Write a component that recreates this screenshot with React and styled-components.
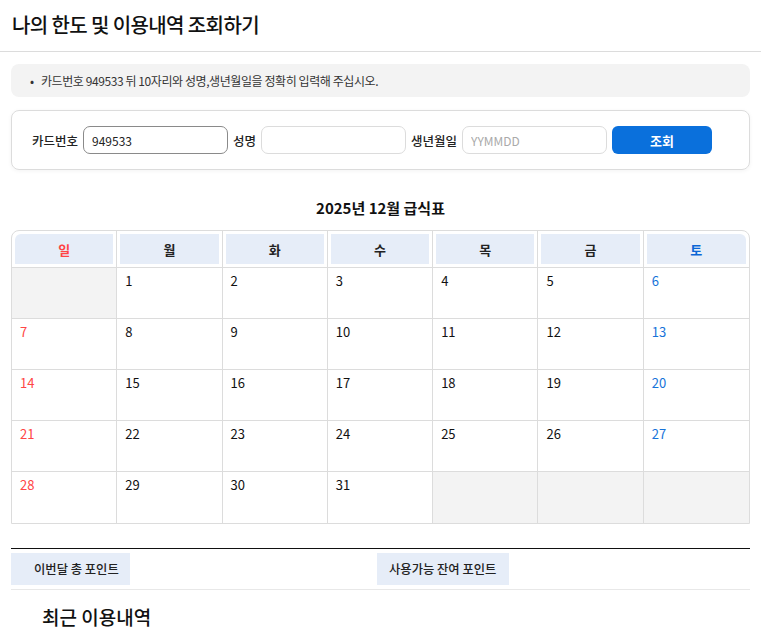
import React from 'react';
import styled, { createGlobalStyle } from 'styled-components';

const GlobalStyle = createGlobalStyle`
  *, *::before, *::after {
    box-sizing: border-box;
  }
  body {
    margin: 0;
    background: #fff;
    font-family: "Noto Sans CJK KR", "Noto Sans", sans-serif;
    color: #111;
  }
`;

const Header = styled.header`
  height: 52px;
  border-bottom: 1px solid #dcdcdc;
  padding: 0 12px 2px;
  display: flex;
  align-items: center;
`;

const Title = styled.h1`
  margin: 0;
  font-size: 20px;
  font-weight: 500;
  letter-spacing: -0.6px;
`;

const Main = styled.main`
  padding: 12px 11px 0;
`;

const Notice = styled.ul`
  margin: 0;
  background: #f3f3f3;
  border-radius: 8px;
  height: 33px;
  padding: 0 0 0 19px;
  display: flex;
  align-items: center;
  font-size: 12px;
  letter-spacing: -0.42px;
  color: #333;
  list-style: none;

  li::before {
    content: '•';
    display: inline-block;
    width: 11px;
  }
`;

const SearchCard = styled.form`
  margin-top: 13px;
  border: 1px solid #dcdcdc;
  border-radius: 8px;
  box-shadow: 0 1px 4px rgba(0, 0, 0, 0.05);
  height: 60px;
  padding: 0 20px;
  display: flex;
  align-items: center;
  gap: 5px;
`;

const Label = styled.label`
  font-size: 12.5px;
  font-weight: 500;
  color: #222;
  white-space: nowrap;
`;

const Input = styled.input`
  width: 145px;
  height: 28px;
  border: 1px solid ${(p) => (p.$focused ? '#8a8a8a' : '#dcdcdc')};
  border-radius: 7px;
  padding: 0 8px;
  font: inherit;
  font-size: 12px;
  color: #222;
  outline: none;

  &::placeholder {
    color: #aaa;
  }
`;

const SearchButton = styled.button`
  width: 100px;
  height: 28px;
  border: 0;
  border-radius: 6px;
  background: #0a70dc;
  color: #fff;
  font: inherit;
  font-size: 13px;
  font-weight: 700;
`;

const CalendarTitle = styled.h2`
  margin: 27px 0 11px;
  text-align: center;
  font-size: 15px;
  font-weight: 700;
  line-height: 22px;
`;

const Calendar = styled.div`
  display: grid;
  grid-template-columns: repeat(7, 1fr);
  border: 1px solid #dcdcdc;
  border-radius: 8px 8px 0 0;
`;

const HeadCell = styled.div`
  padding: 3px;
  border-right: 1px solid #dcdcdc;
  border-bottom: 1px solid #dcdcdc;

  &:nth-child(7) {
    border-right: 0;
  }
`;

const HeadLabel = styled.div`
  height: 30px;
  background: #e6edf8;
  display: flex;
  align-items: center;
  justify-content: center;
  font-size: 13px;
  font-weight: 700;
  color: ${(p) => p.$color};
  border-radius: ${(p) => p.$radius};
`;

const DayCell = styled.div`
  height: 51px;
  padding: 3px 8px 0;
  border-right: 1px solid #dcdcdc;
  border-bottom: 1px solid #dcdcdc;
  background: ${(p) => (p.$empty ? '#f3f3f3' : '#fff')};
  font-size: 13px;
  color: ${(p) => p.$color};

  &:nth-child(7n) {
    border-right: 0;
  }
  &:nth-last-child(-n + 7) {
    border-bottom: 0;
  }
`;

const Points = styled.div`
  margin-top: 24px;
  border-top: 1px solid #111;
  border-bottom: 1px solid #e8e8e8;
  padding: 4px 0;
  display: grid;
  grid-template-columns: 119px 247px 132px 1fr;
`;

const PointLabel = styled.div`
  height: 32px;
  background: #e6edf8;
  display: flex;
  align-items: center;
  padding: ${(p) => p.$pad};
  font-size: 12.3px;
  font-weight: 500;
  color: #222;
  white-space: nowrap;
`;

const SectionTitle = styled.h3`
  margin: 13px 0 0 31px;
  font-size: 19px;
  font-weight: 500;
`;

const weekdays = ['일', '월', '화', '수', '목', '금', '토'];

const dayColor = (i) => (i % 7 === 0 ? '#ff4545' : i % 7 === 6 ? '#1673d9' : '#111');

// December 2025 starts on a Monday, so day n sits at index n
const cells = Array.from({ length: 35 }, (_, i) => (i >= 1 && i <= 31 ? i : null));

export default function App() {
  return (
    <>
      <GlobalStyle />
      <Header>
        <Title>나의 한도 및 이용내역 조회하기</Title>
      </Header>
      <Main>
        <Notice>
          <li>카드번호 949533 뒤 10자리와 성명,생년월일을 정확히 입력해 주십시오.</li>
        </Notice>

        <SearchCard onSubmit={(e) => e.preventDefault()}>
          <Label>카드번호</Label>
          <Input $focused defaultValue="949533" />
          <Label>성명</Label>
          <Input />
          <Label>생년월일</Label>
          <Input placeholder="YYMMDD" />
          <SearchButton type="submit">조회</SearchButton>
        </SearchCard>

        <CalendarTitle>2025년 12월 급식표</CalendarTitle>

        <Calendar>
          {weekdays.map((w, i) => (
            <HeadCell key={w}>
              <HeadLabel
                $color={i === 0 ? '#ff4545' : i === 6 ? '#0b66d6' : '#222'}
                $radius={i === 0 ? '6px 0 0 0' : i === 6 ? '0 6px 0 0' : '0'}
              >
                {w}
              </HeadLabel>
            </HeadCell>
          ))}
          {cells.map((d, i) => (
            <DayCell key={i} $empty={d === null} $color={dayColor(i)}>
              {d}
            </DayCell>
          ))}
        </Calendar>

        <Points>
          <PointLabel $pad="0 11px 0 23px">이번달 총 포인트</PointLabel>
          <div />
          <PointLabel $pad="0 12px">사용가능 잔여 포인트</PointLabel>
          <div />
        </Points>

        <SectionTitle>최근 이용내역</SectionTitle>
      </Main>
    </>
  );
}
